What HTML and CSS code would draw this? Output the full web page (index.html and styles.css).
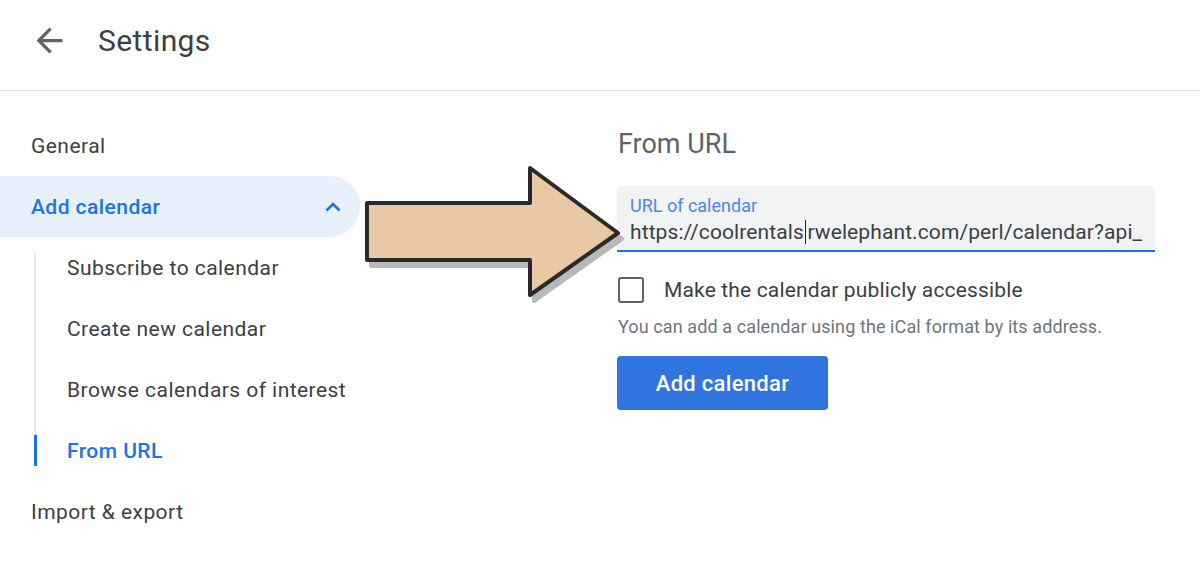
FILE: index.html
```html
<!DOCTYPE html>
<html>
<head>
<meta charset="utf-8">
<link rel="stylesheet" href="styles.css">
</head>
<body>
<header class="topbar">
  <svg class="back" viewBox="0 0 24 24" width="39" height="39"><path d="M20 11H7.83l5.59-5.59L12 4l-8 8 8 8 1.41-1.41L7.83 13H20v-2z" fill="#5f6368"/></svg>
  <h1 class="title">Settings</h1>
</header>
<div class="main">
  <nav class="sidebar">
    <div class="nav-item">General</div>
    <div class="nav-item active">
      <span>Add calendar</span>
      <svg class="chev" viewBox="0 0 16 10" width="16" height="10"><path d="M1.5 8.5 L8 2 L14.5 8.5" fill="none" stroke="#1a73e8" stroke-width="2.6"/></svg>
    </div>
    <ul class="sublist">
      <li class="sub-item">Subscribe to calendar</li>
      <li class="sub-item">Create new calendar</li>
      <li class="sub-item">Browse calendars of interest</li>
      <li class="sub-item current">From URL</li>
    </ul>
    <div class="nav-item">Import &amp; export</div>
  </nav>
  <section class="content">
    <h2 class="heading">From URL</h2>
    <div class="field">
      <div class="field-label">URL of calendar</div>
      <div class="field-value">https://coolrentals<span class="caret"></span>rwelephant.com/perl/calendar?api_</div>
    </div>
    <label class="check-row">
      <span class="checkbox"></span>
      <span class="check-label">Make the calendar publicly accessible</span>
    </label>
    <p class="helper">You can add a calendar using the iCal format by its address.</p>
    <button class="btn">Add calendar</button>
  </section>
  <svg class="callout" viewBox="0 0 275 150" width="275" height="150">
    <path d="M12 42 H175 V7 L263 72 L175 134 V99 H12 Z" fill="#b9b9b9" stroke="#b9b9b9" stroke-width="4" stroke-linejoin="round" transform="translate(4,6)"/>
    <path d="M12 42 H175 V7 L263 72 L175 134 V99 H12 Z" fill="#ebc8a5" stroke="#2a2a2a" stroke-width="4" stroke-linejoin="round"/>
  </svg>
</div>
</body>
</html>
```
FILE: styles.css
```css
* { box-sizing: border-box; }
html, body { margin: 0; padding: 0; background: #fff; }
body {
  font-family: Roboto, "Liberation Sans", Arial, sans-serif;
  color: #3c4043;
  width: 1200px;
  height: 564px;
  overflow: hidden;
}
.topbar {
  height: 91px;
  border-bottom: 1px solid #dadce0;
  display: flex;
  align-items: center;
  padding-left: 30px;
  padding-bottom: 10px;
}
.back { display: block; flex: none; }
.title {
  margin: 0 0 0 29px;
  font-size: 30px;
  font-weight: 400;
  color: #3c4043;
  letter-spacing: 0.4px;
}
.main {
  position: relative;
  display: grid;
  grid-template-columns: 360px 1fr;
}
.sidebar { padding-top: 24px; }
.nav-item {
  height: 61px;
  display: flex;
  align-items: center;
  padding-left: 31px;
  font-size: 21px;
  color: #3c4043;
  letter-spacing: 0.45px;
}
.nav-item.active {
  background: #e8f0fe;
  color: #1a73e8;
  font-weight: 500;
  border-radius: 0 31px 31px 0;
  justify-content: space-between;
  padding-right: 19px;
}
.chev { display: block; }
.sublist {
  display: flow-root;
  list-style: none;
  margin: 15px 0 15px 34px;
  padding: 0;
  border-left: 2px solid #e8eaed;
}
.sub-item {
  position: relative;
  height: 61px;
  display: flex;
  align-items: center;
  padding-left: 31px;
  font-size: 21px;
  color: #3c4043;
  letter-spacing: 0.45px;
}
.sub-item:first-child { margin-top: -15px; }
.sub-item:last-child { margin-bottom: -15px; }
.sub-item.current { color: #1a73e8; font-weight: 500; }
.sub-item.current::before {
  content: "";
  position: absolute;
  left: -2px;
  top: 15px;
  width: 3px;
  height: 31px;
  background: #1a73e8;
}
.content { padding: 37px 0 0 258px; }
.heading {
  margin: 0;
  height: 32px;
  line-height: 32px;
  font-size: 27px;
  font-weight: 400;
  color: #5f6368;
}
.field {
  margin-top: 26px;
  width: 538px;
  height: 66px;
  background: #f1f3f4;
  border-radius: 5px 5px 0 0;
  border-bottom: 2px solid #1a73e8;
  padding: 9px 12px 0 13px;
  margin-left: -1px;
}
.field-label {
  font-size: 18px;
  line-height: 22px;
  color: #4a88ea;
}
.field-value {
  margin-top: 2px;
  font-size: 21px;
  line-height: 26px;
  color: #3c4043;
  white-space: nowrap;
  overflow: hidden;
  letter-spacing: 0.1px;
}
.caret {
  display: inline-block;
  width: 1.5px;
  height: 24px;
  background: #202124;
  vertical-align: -5px;
  margin: 0 1px;
}
.check-row {
  display: flex;
  align-items: center;
  margin-top: 25px;
  height: 26px;
}
.checkbox {
  width: 26px;
  height: 26px;
  border: 2px solid #5f6368;
  border-radius: 3px;
  flex: none;
}
.check-label {
  margin-left: 20px;
  font-size: 21px;
  color: #3c4043;
  letter-spacing: 0.15px;
}
.helper {
  margin: 14px 0 0 0;
  font-size: 18px;
  line-height: 20px;
  color: #70757a;
  letter-spacing: 0.1px;
}
.btn {
  margin-top: 19px;
  margin-left: -1px;
  width: 211px;
  height: 54px;
  border: none;
  border-radius: 4px;
  background: #3074e0;
  color: #fff;
  font-family: Roboto, "Liberation Sans", Arial, sans-serif;
  font-size: 22px;
  font-weight: 500;
  letter-spacing: 0.3px;
}
.callout {
  position: absolute;
  left: 355px;
  top: 70px;
  display: block;
}
```
